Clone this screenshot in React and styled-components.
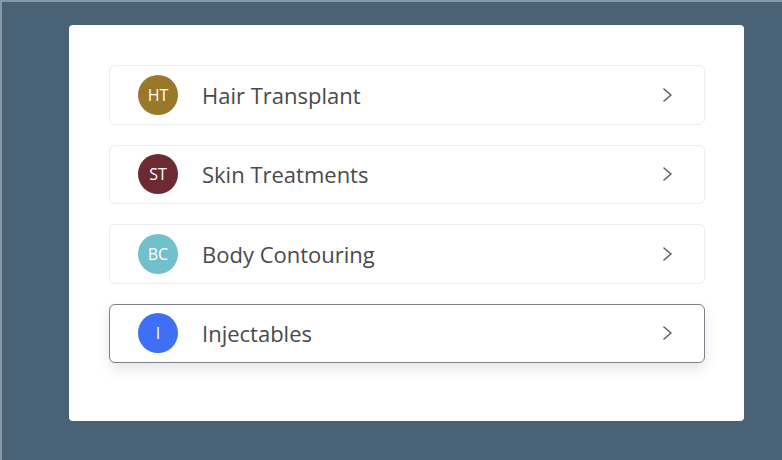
import React from "react";
import styled, { createGlobalStyle } from "styled-components";

const Global = createGlobalStyle`
  html, body { margin: 0; padding: 0; }
  body {
    background: #4a6275;
    font-family: "Open Sans", "Noto Sans", "DejaVu Sans", sans-serif;
  }
`;

const Page = styled.div`
  box-sizing: border-box;
  width: 782px;
  height: 460px;
  border-top: 2px solid #8797a3;
  border-left: 2px solid #8797a3;
  padding: 23px 38px 39px 67px;
  display: flex;
`;

const Card = styled.div`
  flex: 1;
  background: #ffffff;
  border-radius: 4px;
  padding: 40px 39px 40px 40px;
  display: flex;
  flex-direction: column;
  gap: 20px;
`;

const Row = styled.div`
  box-sizing: border-box;
  height: 59.5px;
  display: flex;
  align-items: center;
  padding: 0 30px 0 28px;
  background: #fff;
  border: 1px solid ${(p) => (p.$active ? "#7b8089" : "#ececec")};
  border-radius: 6px;
  box-shadow: ${(p) => (p.$active ? "0 6px 14px rgba(0,0,0,0.10)" : "none")};
`;

const Avatar = styled.div`
  width: 40px;
  height: 40px;
  border-radius: 50%;
  background: ${(p) => p.$color};
  color: #fff;
  display: flex;
  align-items: center;
  justify-content: center;
  font-size: 16px;
  flex-shrink: 0;
`;

const Label = styled.span`
  margin-left: 24px;
  flex: 1;
  font-size: 22px;
  color: #4a4a4a;
`;

const Chevron = () => (
  <svg width="12" height="16" viewBox="0 0 12 16" fill="none">
    <polyline points="2,2 9,8 2,14" stroke="#5f5f5f" strokeWidth="1.6" strokeLinecap="round" strokeLinejoin="round" />
  </svg>
);

const items = [
  { init: "HT", label: "Hair Transplant", color: "#99782a" },
  { init: "ST", label: "Skin Treatments", color: "#6e2a32" },
  { init: "BC", label: "Body Contouring", color: "#72c0cc" },
  { init: "I", label: "Injectables", color: "#3f6ff5", active: true },
];

export default function App() {
  return (
    <>
      <Global />
      <Page>
        <Card>
          {items.map((it) => (
            <Row key={it.label} $active={it.active}>
              <Avatar $color={it.color}>{it.init}</Avatar>
              <Label>{it.label}</Label>
              <Chevron />
            </Row>
          ))}
        </Card>
      </Page>
    </>
  );
}
